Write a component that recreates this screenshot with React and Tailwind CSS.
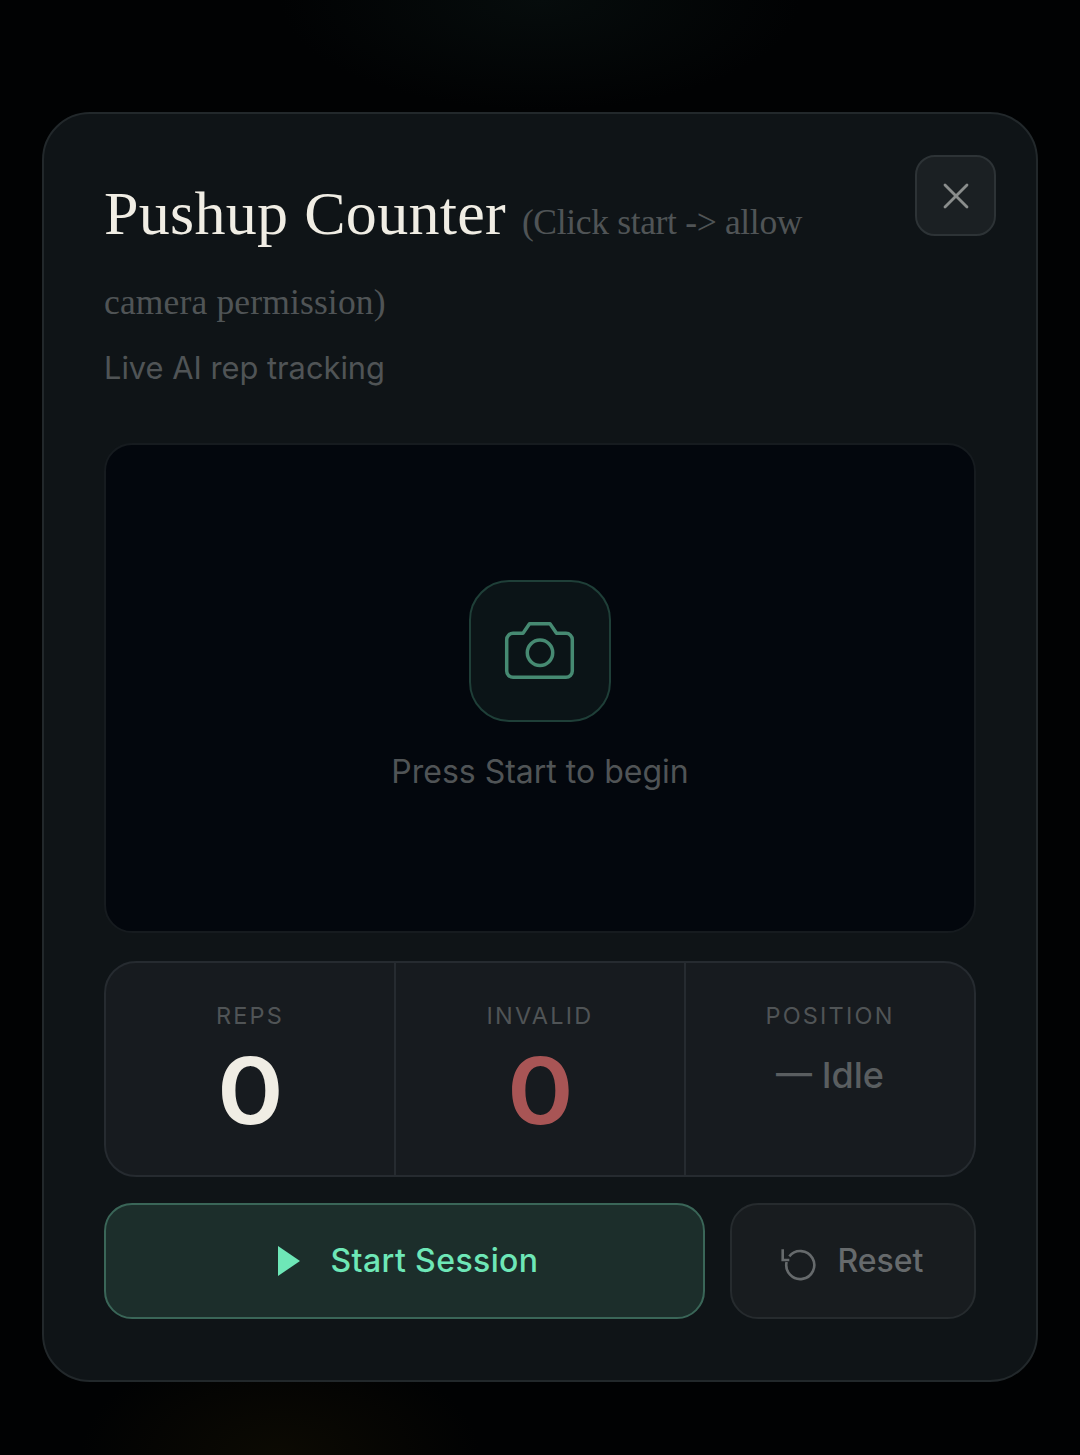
import React from "react";
import { X } from "lucide-react";

function Stat({ label, children, last }) {
  return (
    <div className={`flex-1 flex flex-col items-center pt-[37px] ${last ? "" : "border-r-2 border-[#262b30]"}`}>
      <div className="text-[23.5px] leading-[32px] tracking-[2.2px] text-[#505456]">{label}</div>
      {children}
    </div>
  );
}

export default function App() {
  return (
    <div className="relative w-[1080px] h-[1455px] overflow-hidden bg-[#010203] bg-[radial-gradient(ellipse_260px_110px_at_540px_0px,#060c0c,transparent),radial-gradient(ellipse_200px_110px_at_280px_1455px,#0c0a03,transparent)] pt-[112px] px-[42px] font-['Inter',sans-serif]">
      <div className="relative h-[1270px] rounded-[48px] border-2 border-[#22282b] bg-[#0f1417] px-[60px] pt-[59px]">
        <button className="absolute right-[40px] top-[41px] flex h-[81px] w-[81px] items-center justify-center rounded-[20px] border-2 border-[#2d3336] bg-[#1b2023] text-[#8a8d8c]">
          <X size={44} strokeWidth={1.5} />
        </button>
        <h2 className="w-[760px] font-['Liberation_Serif',serif] text-[62px] leading-[80px] tracking-[0.3px] text-[#f0ede4]">
          Pushup Counter{" "}
          <span className="text-[35.5px] leading-[48px] tracking-[-0.33px] text-[#505456]">(Click start -&gt; allow</span>{" "}
          <span className="text-[35.5px] leading-[48px] tracking-[0.15px] text-[#505456]">camera permission)</span>
        </h2>
        <p className="mt-[11px] text-[30.8px] leading-[48px] text-[#505456]">Live AI rep tracking</p>

        <div className="mt-[51px] flex h-[490px] flex-col items-center rounded-[28px] border-2 border-[#161b1f] bg-[#03070d] pt-[135px]">
          <div className="flex h-[142px] w-[142px] items-center justify-center rounded-[40px] border-2 border-[#1f3f38] bg-[#0b1417]">
            <svg width="72" height="62" viewBox="0 0 72 62" fill="none" stroke="#468a72" strokeWidth="3.5" strokeLinejoin="round" strokeLinecap="round">
              <path d="M25.5 3.7H46L52.5 13.3H62a6.3 6.3 0 0 1 6.3 6.3V51a6.3 6.3 0 0 1-6.3 6.3H9A6.3 6.3 0 0 1 2.7 51V19.6A6.3 6.3 0 0 1 9 13.3H19z" />
              <circle cx="36" cy="32.7" r="12.7" />
            </svg>
          </div>
          <p className="mt-[26px] text-[32px] leading-[48px] text-[#505456]">Press Start to begin</p>
        </div>

        <div className="mt-[28px] flex h-[216px] rounded-[32px] border-2 border-[#262b30] bg-[#171b1f]">
          <Stat label="REPS">
            <div className="mt-[13px] scale-x-[1.1] text-[92px] leading-[92px] font-semibold text-[#f0ede4]">0</div>
          </Stat>
          <Stat label="INVALID">
            <div className="mt-[13px] scale-x-[1.1] text-[92px] leading-[92px] font-semibold text-[#a85555]">0</div>
          </Stat>
          <Stat label="POSITION" last>
            <div className="mt-[15px] text-[36px] leading-[56px] font-medium text-[#5a5e60]">— Idle</div>
          </Stat>
        </div>

        <div className="mt-[26px] flex gap-[25px]">
          <button className="flex h-[116px] w-[601px] items-center justify-center gap-[20px] rounded-[28px] border-2 border-[#3a6658] bg-[#1c2e2b] text-[32px] tracking-[0.4px] font-medium text-[#6ee7b7]">
            <svg width="40" height="40" viewBox="0 0 40 40"><polygon points="8,5 30,20 8,35" fill="#6ee7b7" /></svg>
            Start Session
          </button>
          <button className="flex h-[116px] flex-1 items-center justify-center gap-[20px] rounded-[28px] border-2 border-[#262b2e] bg-[#181c1f] pr-[1px] text-[32px] font-medium text-[#666a6c]">
            <svg width="36" height="34" viewBox="0 0 36 34" fill="none" stroke="currentColor" strokeWidth="2.6" className="mt-[7px]">
              <path d="M1.7 1.3V12H8.3" />
              <path d="M8.3 8.34A14 14 0 1 1 5.6 14" />
            </svg>
            Reset
          </button>
        </div>
      </div>
    </div>
  );
}
